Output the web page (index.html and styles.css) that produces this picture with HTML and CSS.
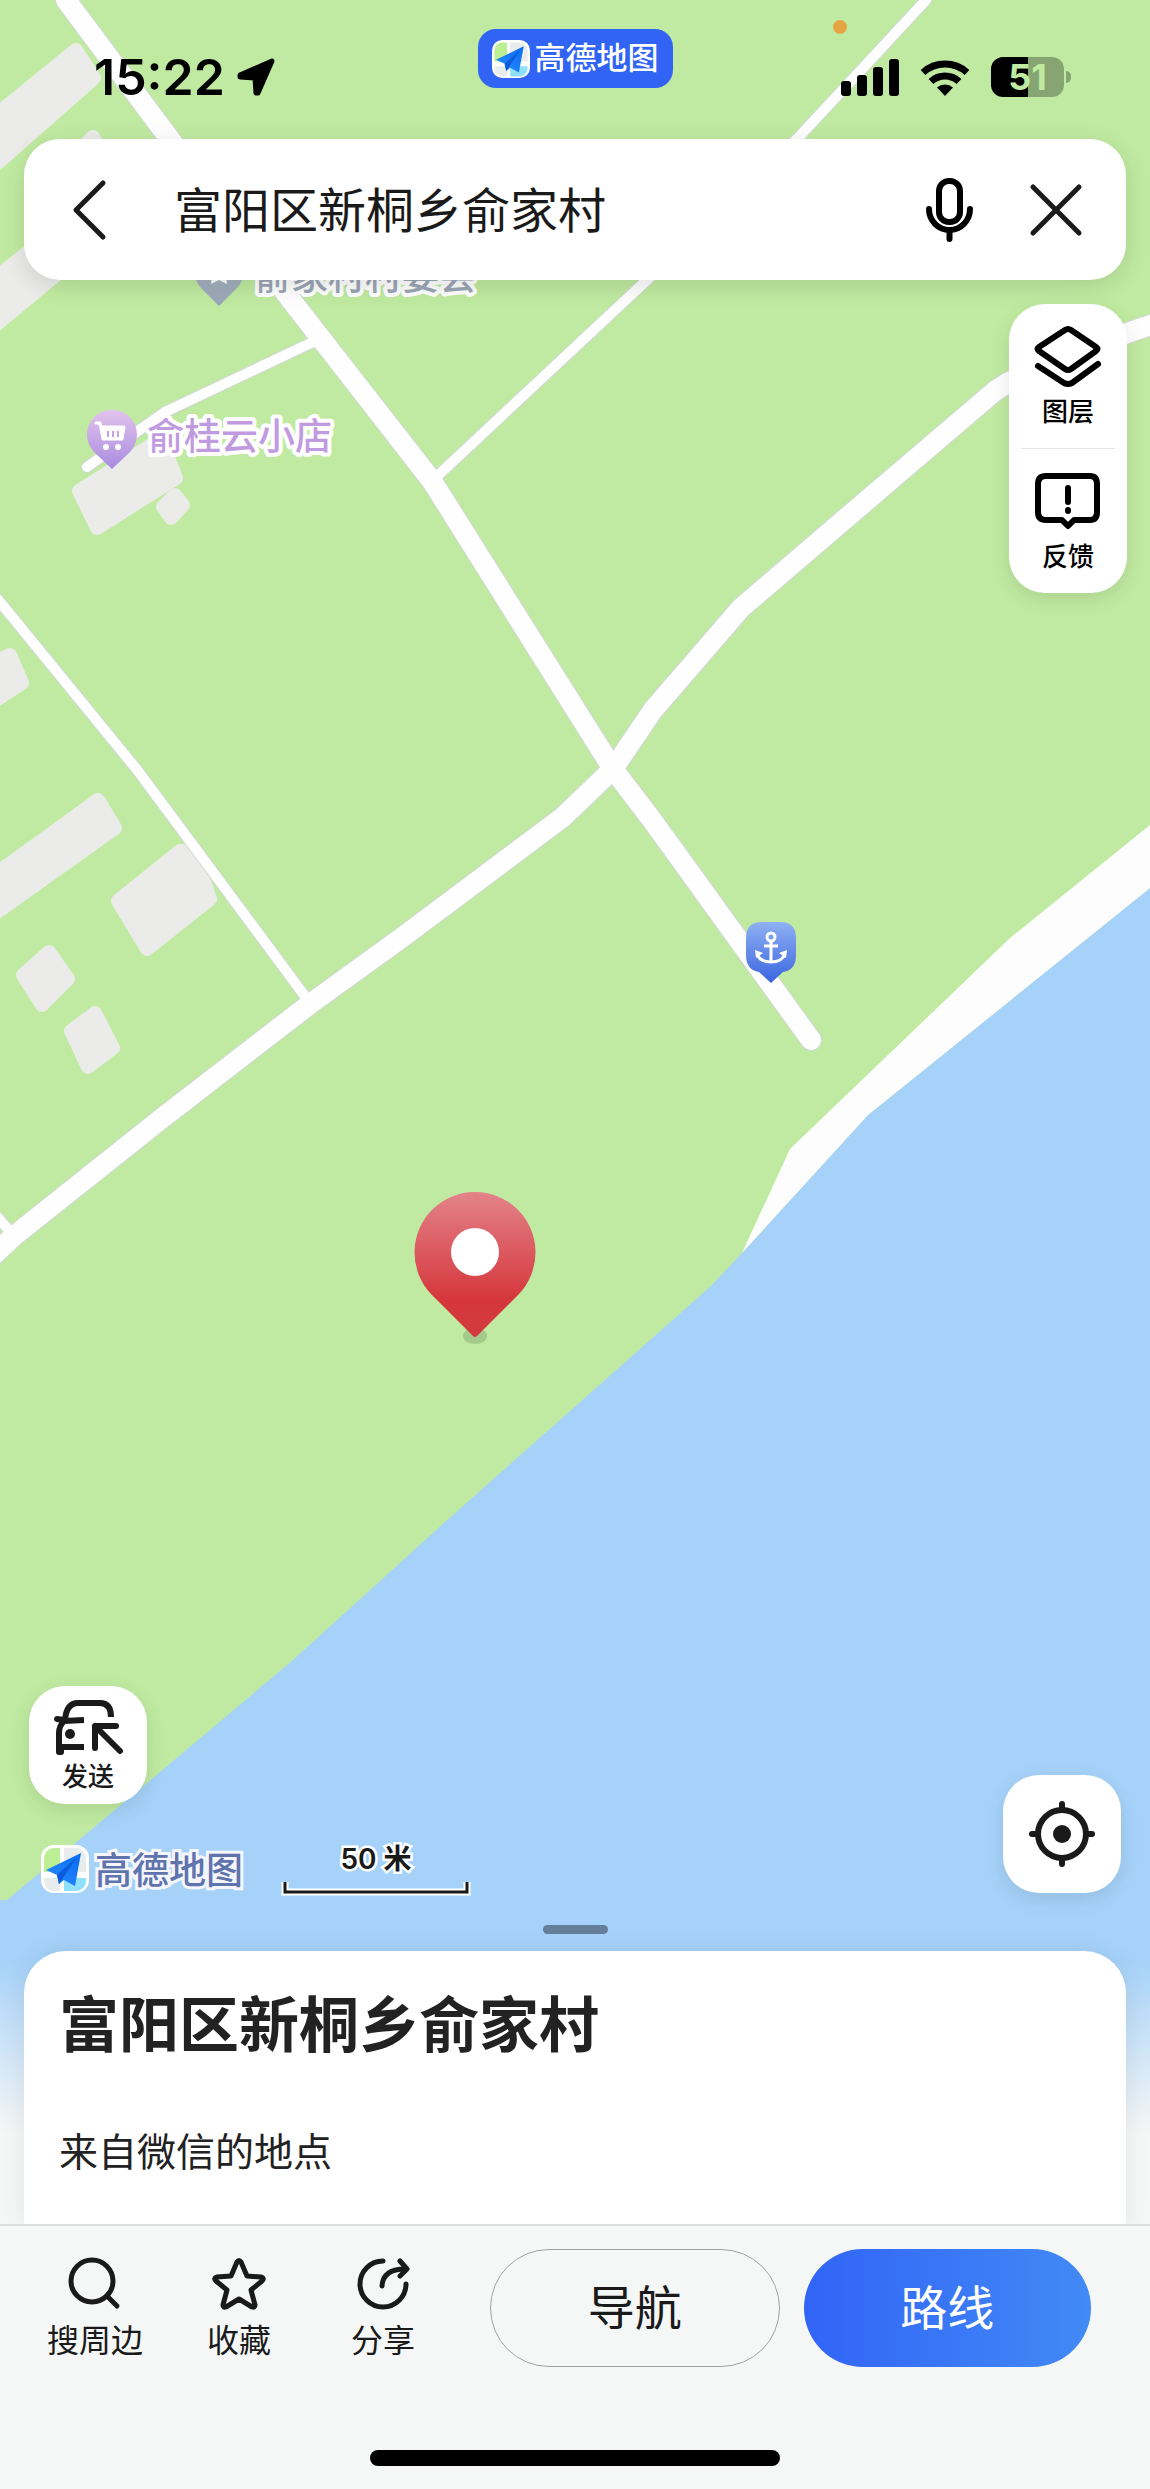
FILE: index.html
```html
<!DOCTYPE html>
<html lang="zh-CN">
<head>
  <meta charset="UTF-8" />
  <meta name="viewport" content="width=device-width, initial-scale=1" />
  <title>高德地图</title>
  <link rel="stylesheet" href="styles.css">
</head>
<body>

  <main class="screen">

    <!-- Map -->
    <svg class="map" viewBox="0 0 1150 2489" preserveAspectRatio="xMidYMin slice" role="img" aria-label="地图">
      <defs>
        <linearGradient id="redPin" x1="0" y1="0" x2="0" y2="1">
          <stop offset="0" stop-color="#e3838a" />
          <stop offset="0.75" stop-color="#d5363b" />
          <stop offset="1" stop-color="#d23c3f" />
        </linearGradient>
        <linearGradient id="purplePin" x1="0" y1="0" x2="0" y2="1">
          <stop offset="0" stop-color="#e3c3ec" />
          <stop offset="1" stop-color="#a98be0" />
        </linearGradient>
        <linearGradient id="greyPin" x1="0" y1="0" x2="0" y2="1">
          <stop offset="0" stop-color="#b9c3cf" />
          <stop offset="1" stop-color="#98a5b5" />
        </linearGradient>
        <linearGradient id="bluePin" x1="0" y1="0" x2="0" y2="1">
          <stop offset="0" stop-color="#8fb0f3" />
          <stop offset="1" stop-color="#3a66e0" />
        </linearGradient>
        <linearGradient id="plane" x1="0" y1="1" x2="1" y2="0">
          <stop offset="0" stop-color="#2a8cff" />
          <stop offset="1" stop-color="#0a6cf0" />
        </linearGradient>
        <symbol id="logo" viewBox="0 0 48 48">
          <rect width="48" height="48" rx="13" fill="#fff" />
          <path d="M3 27V13A10 10 0 0 1 13 3h6v24z" fill="#bdf095" />
          <path d="M23 3h12a10 10 0 0 1 10 10v14H23z" fill="#e8ecec" />
          <path d="M3 33h16v13h-6A10 10 0 0 1 3 36z" fill="#e8ecec" />
          <path d="M23 33h22v3a10 10 0 0 1-10 10H23z" fill="#8fe0fc" />
          <path d="M5 25 40 8 34 41 23 35 18 39 16 30z" fill="url(#plane)" />
          <path d="M16 30 36 12 22 33 18 39z" fill="#0a5cdc" />
        </symbol>
      </defs>

      <rect width="1150" height="2489" class="land" />
      <path class="water" d="M1150 888 868 1115 742 1253 711 1286 445 1522 293 1660 147 1783 7 1900H0V2489H1150Z" />
      <path class="beach" d="M1150 825 1010 938 790 1149 742 1253 868 1115 1150 888Z" />

      <g class="buildings">
        <path d="M-20 128 76 50 94 78 1 160-20 175Z" />
        <path d="M88 142 93 137 100 150Z" />
        <path d="M-20 290 50 235 80 255-20 338Z" />
        <path d="M79 491 150 446 166 452 176 478 97 528Z" />
        <path d="M163 507 175 495 183 505 171 518Z" />
        <path d="M-10 664 10 655 22 683-10 704Z" />
        <path d="M-10 878 98 800 115 828-10 917Z" />
        <path d="M118 901 180 851 194 852 210 899 147 949Z" />
        <path d="M23 975 49 952 68 979 42 1005Z" />
        <path d="M71 1031 95 1013 113 1048 88 1067Z" />
      </g>

      <g class="road-casing">
        <path class="wide" d="M66 0 169 138 291 300 432 481 613 769 652 820 811 1040" />
        <path class="wide" d="M1180 315 1127 333 1009 382 995 391 900 472 741 608 653 710 613 769 563 817 400 939 310 1004 161 1119 14 1236-14 1262" />
        <path class="mid" d="M926 0 798 138 647 280 432 481" />
        <path class="mid" d="M313 342 165 412 87 467" />
        <path class="mid" d="M-14 586 0 602 138 771 310 1003" />
        <path class="mid" d="M-14 1204 14 1236" />
      </g>
      <g class="road">
        <path class="wide" d="M66 0 169 138 291 300 432 481 613 769 652 820 811 1040" />
        <path class="wide" d="M1180 315 1127 333 1009 382 995 391 900 472 741 608 653 710 613 769 563 817 400 939 310 1004 161 1119 14 1236-14 1262" />
        <path class="mid" d="M926 0 798 138 647 280 432 481" />
        <path class="mid" d="M313 342 165 412 87 467" />
        <path class="mid" d="M-14 586 0 602 138 771 310 1003" />
        <path class="mid" d="M-14 1204 14 1236" />
      </g>

      <!-- Village committee -->
      <path d="M219 306 201 288A25 25 0 1 1 237 288Z" fill="url(#greyPin)" />
      <path d="M219 260 223 268 232 269 226 276 227 284 219 280 211 284 212 276 206 269 215 268Z" fill="#fff" />
      <text class="poi poi-grey" x="254" y="290">俞家村村委会</text>

      <!-- Shop -->
      <path d="M112 469 94 452A25 25 0 1 1 130 452Z" fill="url(#purplePin)" />
      <path d="M96 423H100L103 439H122L124 427H101" fill="#fff" stroke="#fff" stroke-width="3" stroke-linejoin="round" stroke-linecap="round" />
      <path d="M108 431v6M113 431v6M118 431v6" stroke="#c4a2e4" stroke-width="2" />
      <circle cx="106" cy="447" r="3" fill="#fff" />
      <circle cx="118" cy="447" r="3" fill="#fff" />
      <text class="poi poi-purple" x="147" y="450">俞桂云小店</text>

      <!-- Ferry pier -->
      <path d="M762 922H780Q796 922 796 938V955Q796 970 783 972L771 983 759 972Q746 970 746 955V938Q746 922 762 922Z" fill="url(#bluePin)" />
      <g fill="none" stroke="#fff" stroke-width="3">
        <circle cx="771" cy="937" r="4" />
        <path d="M771 941V962M764 946H778" />
        <path d="M757 954Q760 962 771 962T785 954" />
      </g>
      <path d="M755 950 763 953 756 958ZM787 950 779 953 786 958Z" fill="#fff" />

      <!-- Selected place -->
      <ellipse cx="475" cy="1336" rx="12" ry="8" fill="#a4cb8b" />
      <path d="M477 1336Q475 1338 473 1336L431 1294A60.500 60.500 0 1 1 519 1294Z" fill="url(#redPin)" />
      <circle cx="475" cy="1252" r="24" fill="#fff" />
    </svg>

    <!-- Status bar -->
    <header class="status">
      <div class="status-left">
        <span class="time">15:22</span>
        <svg width="38" height="38" viewBox="0 0 38 38" aria-hidden="true">
          <path d="M35 3 21 35H19L18 20 3 19V17Z" fill="#000" stroke="#000" stroke-width="5" stroke-linejoin="round" />
        </svg>
      </div>
      <a class="app-pill" href="#">
        <svg width="38" height="38" aria-hidden="true"><use href="#logo" /></svg>
        <span>高德地图</span>
      </a>
      <div class="status-right">
        <span class="mic-dot"></span>
        <svg width="58" height="37" viewBox="0 0 58 37" aria-hidden="true">
          <rect x="0" y="22" width="10" height="15" rx="3" />
          <rect x="16" y="16" width="10" height="21" rx="3" />
          <rect x="32" y="8" width="10" height="29" rx="3" />
          <rect x="48" y="0" width="10" height="37" rx="3" />
        </svg>
        <svg width="50" height="37" viewBox="0 0 50 37" aria-hidden="true">
          <path d="M3 13.500A33 33 0 0 1 47 13.500M11 22.500A20.500 20.500 0 0 1 39 22.500" fill="none" stroke="#000" stroke-width="7" />
          <path d="M25 37 17 28.500A12 12 0 0 1 33 28.500Z" />
        </svg>
        <span class="battery">51</span>
      </div>
    </header>

    <!-- Search -->
    <form class="search">
      <button type="button" class="icon-btn back" aria-label="返回">
        <svg width="36" height="64" viewBox="0 0 36 64"><path d="M31 5 4 32 31 59" /></svg>
      </button>
      <input type="text" class="search-input" value="富阳区新桐乡俞家村" aria-label="搜索地点" />
      <button type="button" class="icon-btn" aria-label="语音搜索">
        <svg class="mic" width="48" height="66" viewBox="0 0 48 66">
          <rect x="13" y="4" width="21" height="41" rx="10" />
          <path d="M3 32A20.500 21 0 0 0 44 32M23.500 54V62" />
        </svg>
      </button>
      <button type="button" class="icon-btn close" aria-label="关闭">
        <svg width="56" height="56" viewBox="0 0 56 56"><path d="M5 5 51 51M51 5 5 51" /></svg>
      </button>
    </form>

    <div class="tools">
      <button type="button" class="tool">
        <svg width="68" height="64" viewBox="0 0 68 64">
          <path d="M31 6Q34 4 37 6L62 23Q65 25 62 27L37 45Q34 47 31 45L5 27Q2 25 5 23Z" />
          <path d="M4 42 30 59Q34 61 38 59L64 40" />
        </svg>
        <span>图层</span>
      </button>
      <button type="button" class="tool">
        <svg width="68" height="64" viewBox="0 0 68 64">
          <path d="M12 7H56Q63 7 63 15V43Q63 51 56 51H40L34 57 28 51H12Q4 51 4 43V15Q4 7 12 7Z" />
          <path d="M34 19V33M34 41V42" />
        </svg>
        <span>反馈</span>
      </button>
    </div>

    <!-- Controls over the bottom of the map -->
    <div class="map-controls">
      <div class="controls-left">
        <button type="button" class="square send">
          <svg width="72" height="64" viewBox="0 0 72 64">
            <path d="M13 24Q14 6 26 6H48Q59 6 59 20M12 24 32 23M12 24Q7 29 7 36V50H32" />
            <path class="cap" d="M5 22 12 23M7 36V55M9 52V55M43 51V29H64M43 29 68 54" />
            <circle cx="18" cy="37" r="5" fill="#1a1a1a" stroke="none" />
          </svg>
          <span>发送</span>
        </button>
        <div class="attribution">
          <svg width="48" height="48" aria-hidden="true"><use href="#logo" /></svg>
          <span class="brand">高德地图</span>
          <div class="scale">
            <span>50 米</span>
            <svg width="190" height="16" viewBox="0 0 190 16" aria-hidden="true">
              <path d="M4 2V12H186V2" fill="none" stroke="#fff" stroke-width="7" />
              <path d="M4 2V12H186V2" fill="none" stroke="#1a1a1a" stroke-width="3" />
            </svg>
          </div>
        </div>
      </div>
      <button type="button" class="square locate" aria-label="定位">
        <svg width="66" height="66" viewBox="0 0 66 66">
          <circle cx="33" cy="33" r="24" />
          <path class="cap" d="M33 3V9M33 57V63M3 33H9M57 33H63" />
          <circle cx="33" cy="33" r="9" fill="#1a1a1a" stroke="none" />
        </svg>
      </button>
    </div>

    <div class="handle"></div>

    <!-- Place sheet -->
    <section class="sheet">
      <div class="card">
        <h1>富阳区新桐乡俞家村</h1>
        <p>来自微信的地点</p>
      </div>
    </section>

    <footer class="bottom-bar">
      <div class="bar-row">
        <nav class="actions">
          <button type="button">
            <svg width="56" height="56" viewBox="0 0 56 56">
              <circle cx="25" cy="26" r="21" /><path d="M40 41 50 51" />
            </svg>
            <span>搜周边</span>
          </button>
          <button type="button">
            <svg width="56" height="56" viewBox="0 0 56 56">
              <path d="M26 7Q28 4 30 7L36 21 50 22Q54 23 51 26L40 35 44 50Q44 53 41 52L28 44 15 52Q12 53 12 50L16 35 5 26Q2 23 6 22L20 21Z" />
            </svg>
            <span>收藏</span>
          </button>
          <button type="button">
            <svg width="56" height="56" viewBox="0 0 56 56">
              <path d="M28 6A23 23 0 1 0 51 29" />
              <path d="M27 31Q28 14 50 14M45 6 52 14 45 21" />
            </svg>
            <span>分享</span>
          </button>
        </nav>
        <button type="button" class="btn btn-outline">导航</button>
        <button type="button" class="btn btn-primary">路线</button>
      </div>
      <div class="home-indicator"></div>
    </footer>

  </main>

</body>
</html>
```

FILE: styles.css
```css
* {
  box-sizing: border-box;
}
body {
  margin: 0;
  font-family: Inter, "Noto Sans CJK SC", sans-serif;
  color: #222;
  background: #f5f7f7;
}
button {
  padding: 0;
  border: none;
  background: none;
  font-family: inherit;
  color: #1a1a1a;
  cursor: pointer;
}
svg {
  display: block;
}
.screen {
  position: relative;
  display: flex;
  flex-direction: column;
  min-height: 100vh;
  overflow: hidden;
}

/* map */
.map {
  position: absolute;
  inset: 0;
  z-index: -1;
  width: 100%;
  height: 100%;
}
.land {
  fill: #c0eaa1;
}
.water {
  fill: #a6d2f9;
}
.beach {
  fill: #fdfdfd;
}
.buildings {
  fill: #ebece9;
  stroke: #ebece9;
  stroke-width: 14;
  stroke-linejoin: round;
}
.road,
.road-casing {
  fill: none;
  stroke-linecap: round;
  stroke-linejoin: round;
}
.road {
  stroke: #fefefe;
}
.road-casing {
  stroke: #d3d8d6;
}
.road .wide {
  stroke-width: 20;
}
.road .mid {
  stroke-width: 10;
}
.road-casing .wide {
  stroke-width: 22;
}
.road-casing .mid {
  stroke-width: 12;
}
.poi {
  font-family: "Noto Sans CJK SC", sans-serif;
  font-size: 37px;
  font-weight: 500;
  stroke: #fff;
  stroke-width: 8;
  stroke-linejoin: round;
  paint-order: stroke;
}
.poi-grey {
  fill: #9ba6b5;
}
.poi-purple {
  fill: #c19bdf;
}

/* status bar */
.status {
  display: grid;
  grid-template-columns: 1fr auto 1fr;
  align-items: center;
  height: 125px;
  padding-top: 29px;
  margin-bottom: 14px;
}
.status-left {
  display: flex;
  align-items: center;
  gap: 12px;
  padding-left: 94px;
}
.time {
  font-size: 50px;
  font-weight: 600;
  line-height: 56px;
  color: #000;
}
.app-pill {
  display: flex;
  align-items: center;
  align-self: start;
  gap: 5px;
  height: 59px;
  padding: 0 14px;
  border-radius: 18px;
  background: #3164f4;
  color: #fff;
  font-size: 31px;
  font-weight: 500;
  line-height: 40px;
  text-decoration: none;
}
.app-pill span {
  padding-bottom: 2px;
}
.status-right {
  position: relative;
  display: flex;
  align-items: center;
  justify-content: flex-end;
  gap: 21px;
  padding-right: 86px;
}
.mic-dot {
  position: absolute;
  right: 303px;
  bottom: 63px;
  width: 14px;
  height: 14px;
  border-radius: 50%;
  background: #e6a544;
}
.battery {
  position: relative;
  width: 73px;
  height: 40px;
  border-radius: 12px;
  background: linear-gradient(to right, #000 51%, #87a572 51%);
  color: #c0eaa1;
  font-size: 36px;
  font-weight: 700;
  line-height: 40px;
  text-align: center;
}
.battery::after {
  content: "";
  position: absolute;
  left: 75px;
  top: 14px;
  width: 5px;
  height: 12px;
  border-radius: 0 5px 5px 0;
  background: #87a572;
}

/* search */
.search {
  display: flex;
  align-items: center;
  height: 141px;
  margin: 0 24px;
  padding: 0 42px 0 48px;
  border-radius: 36px;
  background: #fff;
  box-shadow: 0 6px 24px rgba(0, 0, 0, 0.12);
}
.icon-btn svg {
  fill: none;
  stroke: #1a1a1a;
  stroke-width: 5;
  stroke-linecap: round;
  stroke-linejoin: round;
}
.icon-btn .mic {
  stroke: #000;
  stroke-width: 6;
}
.back {
  margin-right: 66px;
}
.close {
  margin-left: 54px;
}
.search-input {
  flex: 1;
  min-width: 0;
  padding: 0 0 6px;
  border: none;
  outline: none;
  background: none;
  color: #1a1a1a;
  font-family: inherit;
  font-size: 48px;
}

/* right tool card */
.tools {
  align-self: flex-end;
  width: 118px;
  margin: 24px 23px 0 0;
  border-radius: 36px;
  background: #fff;
  box-shadow: 0 6px 20px rgba(0, 0, 0, 0.1);
}
.tool {
  display: flex;
  flex-direction: column;
  align-items: center;
  gap: 8px;
  width: 94px;
  margin: 0 auto;
  padding: 20px 0;
  color: #000;
  font-size: 26px;
  font-weight: 500;
  line-height: 32px;
}
.tool + .tool {
  border-top: 1px solid #e4e4e4;
}
.tool svg {
  fill: none;
  stroke: #000;
  stroke-width: 6;
  stroke-linecap: round;
  stroke-linejoin: round;
}

/* bottom map controls */
.map-controls {
  display: flex;
  justify-content: space-between;
  align-items: flex-end;
  margin-top: auto;
  padding: 0 29px;
}
.square {
  display: flex;
  flex-direction: column;
  align-items: center;
  justify-content: center;
  width: 118px;
  height: 118px;
  border-radius: 36px;
  background: #fff;
  box-shadow: 0 6px 20px rgba(0, 0, 0, 0.1);
  font-size: 26px;
  font-weight: 500;
  line-height: 32px;
}
.square svg {
  fill: none;
  stroke: #1a1a1a;
  stroke-width: 6;
  stroke-linejoin: round;
}
.square .cap {
  stroke-linecap: round;
}
.attribution {
  display: flex;
  align-items: center;
  gap: 6px;
  height: 48px;
  margin-top: 41px;
  padding-left: 12px;
}
.brand {
  padding-top: 4px;
  color: #5f73ad;
  font-size: 37px;
  font-weight: 500;
  line-height: 48px;
  -webkit-text-stroke: 6px #f4f6fc;
  paint-order: stroke;
}
.scale {
  display: flex;
  flex-direction: column;
  align-items: center;
  gap: 5px;
  margin-left: 32px;
  color: #1a1a1a;
  font-size: 28px;
  font-weight: 600;
  line-height: 32px;
}
.scale span {
  -webkit-text-stroke: 5px #fff;
  paint-order: stroke;
}

/* sheet */
.handle {
  width: 65px;
  height: 9px;
  margin: 32px auto 17px;
  border-radius: 5px;
  background: #657f9b;
}
.sheet {
  padding: 0 24px;
  background: linear-gradient(to bottom, rgba(245, 246, 246, 0) 10px, #f5f6f6 180px);
}
.card {
  padding: 38px 35px 48px;
  border-radius: 42px 42px 0 0;
  background: #fff;
  box-shadow: 0 0 24px rgba(0, 0, 0, 0.08);
}
.card h1 {
  margin: 0 0 67px;
  font-size: 60px;
  font-weight: 600;
  line-height: 72px;
}
.card p {
  margin: 0;
  font-size: 39px;
  line-height: 48px;
}
.bottom-bar {
  position: relative;
  padding-bottom: 23px;
  border-top: 2px solid #dcdedd;
  background: #f5f7f7;
}
.bar-row {
  display: flex;
  gap: 24px;
  padding: 23px 59px 0 23px;
}
.actions {
  display: flex;
  margin-right: 11px;
}
.actions button {
  display: flex;
  flex-direction: column;
  align-items: center;
  gap: 10px;
  width: 144px;
  padding-top: 6px;
  font-size: 32px;
  line-height: 40px;
}
.actions svg {
  fill: none;
  stroke: #1a1a1a;
  stroke-width: 5;
  stroke-linecap: round;
  stroke-linejoin: round;
}
.btn {
  flex: 1;
  height: 118px;
  padding-bottom: 8px;
  border-radius: 59px;
  font-size: 47px;
}
.btn-outline {
  border: 1px solid #a0a2a2;
}
.btn-primary {
  background: linear-gradient(to right, #3164f6, #428af6);
  color: #fff;
}
.home-indicator {
  width: 410px;
  height: 16px;
  margin: 83px auto 0;
  border-radius: 8px;
  background: #000;
}
```
